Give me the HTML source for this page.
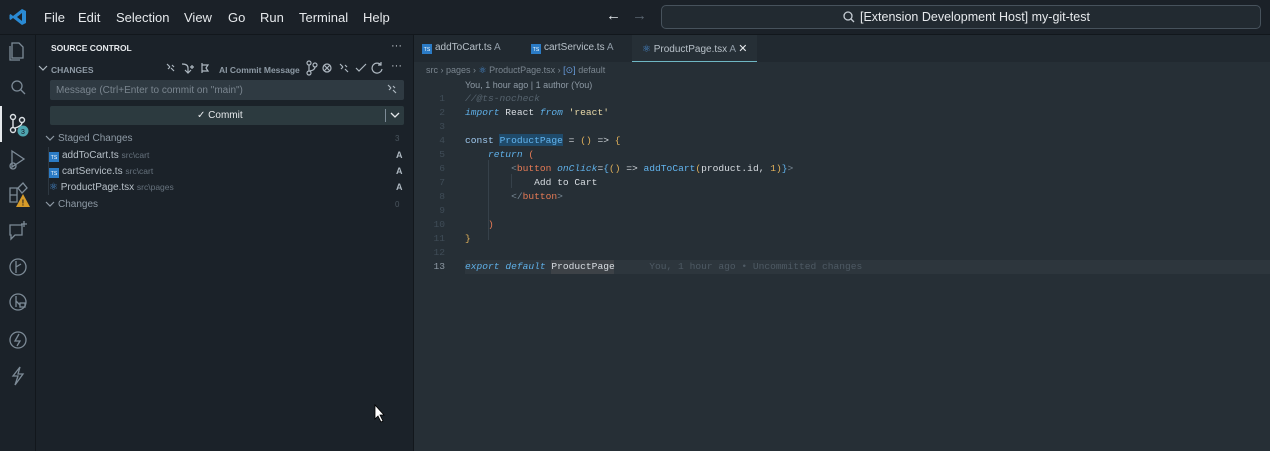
<!DOCTYPE html>
<html><head><meta charset="utf-8"><style>
*{margin:0;padding:0;box-sizing:border-box}
body{width:1270px;height:451px;overflow:hidden;background:#262f36;font-family:"Liberation Sans",sans-serif;color:#c5ccd3;position:relative}
.abs{position:absolute}
#title{left:0;top:0;width:1270px;height:35px;background:#1b2128;border-bottom:1px solid #12171c}
.menu{top:10px;font-size:13px;color:#e6e9ec}
#act{left:0;top:35px;width:36px;height:416px;background:#1b2229;border-right:1px solid #12171c}
#side{left:36px;top:35px;width:378px;height:416px;background:#1b2229;border-right:1px solid #12171c}
.t{font-size:11px;white-space:nowrap}
#tabs{left:414px;top:35px;width:856px;height:27px;background:#212930}
.code{font-family:"Liberation Mono",monospace;font-size:9.6px;white-space:pre;left:465px;color:#d8dde2}
.ln{font-family:"Liberation Mono",monospace;font-size:9.6px;color:#3f4c57;width:30px;text-align:right;left:415px}
.kw{color:#5fb0e8;font-style:italic}
.o{color:#e0b05a}
.tg{color:#e57a55}
.fn{color:#62b4ee}
.ts{display:inline-block;width:10px;height:10px;background:#2b7bc5;color:#fff;font-size:5px;text-align:center;line-height:13px;vertical-align:-1px;margin-right:3px}
.ic{stroke:#7d8b97;fill:none;stroke-width:1.3}
.tb{stroke:#aeb8c1;fill:none;stroke-width:1.2}
</style></head><body>
<div id="title" class="abs"></div>
<svg class="abs" style="left:9px;top:8px" width="18" height="18" viewBox="0 0 18 18"><path d="M13 1 L17 3 V15 L13 17 L4 10 L1.5 12 L0.5 11 V7 L1.5 6 L4 8 L13 1 Z M13 5 L8 9 L13 13 Z" fill="#2a8ad4"/></svg>
<div class="abs menu" style="left:44px">File</div>
<div class="abs menu" style="left:78px">Edit</div>
<div class="abs menu" style="left:116px">Selection</div>
<div class="abs menu" style="left:184px">View</div>
<div class="abs menu" style="left:228px">Go</div>
<div class="abs menu" style="left:260px">Run</div>
<div class="abs menu" style="left:299px">Terminal</div>
<div class="abs menu" style="left:363px">Help</div>
<div class="abs" style="left:606px;top:7px;font-size:15px;color:#e0e4e8">←</div>
<div class="abs" style="left:632px;top:7px;font-size:15px;color:#5a6570">→</div>
<div class="abs" style="left:661px;top:5px;width:600px;height:24px;border:1px solid #47525c;border-radius:5px;background:#222a31"></div>
<svg class="abs" style="left:843px;top:11px" width="12" height="12"><circle cx="5" cy="5" r="4" stroke="#c5ccd3" fill="none" stroke-width="1.3"/><path d="M8 8 L11 11" stroke="#c5ccd3" stroke-width="1.3"/></svg>
<div class="abs" style="left:860px;top:10px;font-size:12.5px;color:#e6e9ec">[Extension Development Host] my-git-test</div>

<div id="act" class="abs"></div>
<div class="abs" style="left:0;top:106px;width:2px;height:36px;background:#e6e9ec"></div>
<svg class="abs" style="left:0;top:35px" width="36" height="360">
<g class="ic"><path d="M12 8 H19 L23 12 V23 H12 Z M10 11 V25 H20"/>
<circle cx="17" cy="51" r="5"/><path d="M20.5 54.5 L25 59"/></g>
<g stroke="#dde2e6" fill="none" stroke-width="1.4"><circle cx="13" cy="82" r="2.5"/><circle cx="13" cy="95" r="2.5"/><circle cx="22" cy="85" r="2.5"/><path d="M13 84.5 V92.5 M22 87.5 Q22 91 15 93"/></g>
<circle cx="23" cy="96" r="5.5" fill="#4fa6b0"/><text x="23" y="99" font-size="7" text-anchor="middle" fill="#112">3</text>
<g class="ic"><path d="M12 116 L24 124 L12 132 Z"/><circle cx="13" cy="131" r="3"/>
<path d="M10 153 H17 V167 H10 Z M10 160 H17 M18 153 L23 148 L27 153 L22 158 Z"/>
<path d="M10 190 H22 V200 H15 L11 204 V200 H10 Z M24 186 V192 M21 189 H27"/>
<circle cx="18" cy="232" r="8"/><path d="M16 226 V238 M16 232 L21 229"/>
<circle cx="18" cy="267" r="8"/><path d="M16 261 V272 M16 266 L20 270"/><rect x="20" y="268" width="5" height="4"/>
<circle cx="18" cy="305" r="8"/><path d="M19 299 L15 306 H20 L17 311"/>
<path d="M20 332 L13 341 H18 L15 350 L23 339 H18 Z"/></g>
</svg>
<svg class="abs" style="left:16px;top:194px" width="14" height="13"><path d="M7 0 L14 13 H0 Z" fill="#d79b29"/><text x="7" y="11.5" font-size="8" text-anchor="middle" fill="#222" font-weight="bold">!</text></svg>

<div id="side" class="abs"></div>
<div class="abs t" style="left:51px;top:43px;font-size:8.5px;color:#e6e9ec;font-weight:bold">SOURCE CONTROL</div>
<div class="abs t" style="left:391px;top:40px;color:#c5ccd3">···</div>
<svg class="abs" style="left:38px;top:64px" width="10" height="8"><path d="M1 2 L5 6 L9 2" class="tb" stroke="#8e9aa5"/></svg>
<div class="abs t" style="left:51px;top:65px;font-size:8.5px;color:#8e9aa5;font-weight:bold">CHANGES</div>
<svg class="abs" style="left:164px;top:61px" width="50" height="14">
<g class="tb"><path d="M3 3 L6 6 M7 7 L10 10 M4 8 L6 6 M8 4 L10 6"/>
<path d="M18 3 Q24 3 24 7 L24 12 M21 9 L24 12 L27 9 M26 6 H30 M28 4 V8"/>
<path d="M38 2 V12 M38 4 H44 L42 7 L44 10 H38"/></g></svg>
<div class="abs t" style="left:219px;top:65px;font-size:8.5px;color:#8e9aa5;font-weight:bold">AI Commit Message</div>
<svg class="abs" style="left:304px;top:60px" width="86" height="16">
<g class="tb"><circle cx="5" cy="3" r="2"/><circle cx="5" cy="13" r="2"/><circle cx="11" cy="5" r="2"/><path d="M5 5 V11 M11 7 Q11 10 6 11"/>
<circle cx="23" cy="8" r="4"/><path d="M20 5 L26 11 M26 5 L20 11"/>
<path d="M36 4 L39 7 M41 9 L44 12 M37 9 L39 7 M41 5 L43 7"/>
<path d="M52 8 L55 11 L62 4"/>
<path d="M77 5 A5 5 0 1 0 78 9 M77 2 V5 H74"/></g></svg>
<div class="abs t" style="left:391px;top:60px;color:#c5ccd3">···</div>
<div class="abs" style="left:50px;top:80px;width:354px;height:20px;background:#2f3a42;border-radius:2px"></div>
<div class="abs t" style="left:56px;top:85px;font-size:10px;color:#7a858f">Message (Ctrl+Enter to commit on "main")</div>
<svg class="abs" style="left:386px;top:83px" width="12" height="12"><path d="M2 2 L5 5 M7 7 L10 10 M3 7 L5 5 M7 3 L9 5" class="tb"/></svg>
<div class="abs" style="left:50px;top:106px;width:354px;height:19px;background:#2c3a3f;border-radius:2px"></div>
<div class="abs" style="left:385px;top:109px;width:1px;height:13px;background:#7d8b97"></div>
<div class="abs t" style="left:197px;top:110px;font-size:10px;color:#e6e9ec">✓ Commit</div>
<svg class="abs" style="left:390px;top:111px" width="10" height="8"><path d="M1 2 L5 6 L9 2" stroke="#e6e9ec" stroke-width="1.3" fill="none"/></svg>
<svg class="abs" style="left:45px;top:134px" width="10" height="8"><path d="M1 2 L5 6 L9 2" stroke="#8e9aa5" stroke-width="1.2" fill="none"/></svg>
<div class="abs t" style="left:58px;top:133px;font-size:10px;color:#8e9aa5">Staged Changes</div>
<div class="abs t" style="left:395px;top:134px;font-size:8px;color:#4a555e">3</div>
<div class="abs" style="left:48px;top:147px;width:1px;height:48px;background:#2e3841"></div>
<div class="abs t" style="left:49px;top:150px;font-size:10px"><span class="ts">TS</span><span style="color:#b7c0c8">addToCart.ts</span> <span style="color:#66727d;font-size:8.5px">src\cart</span></div>
<div class="abs t" style="left:49px;top:166px;font-size:10px"><span class="ts">TS</span><span style="color:#b7c0c8">cartService.ts</span> <span style="color:#66727d;font-size:8.5px">src\cart</span></div>
<div class="abs t" style="left:49px;top:182px;font-size:10px"><span style="color:#4a90d9">⚛</span> <span style="color:#b7c0c8">ProductPage.tsx</span> <span style="color:#66727d;font-size:8.5px">src\pages</span></div>
<div class="abs t" style="left:396px;top:150px;font-size:9px;color:#aeb8c1;font-weight:bold">A</div>
<div class="abs t" style="left:396px;top:166px;font-size:9px;color:#aeb8c1;font-weight:bold">A</div>
<div class="abs t" style="left:396px;top:182px;font-size:9px;color:#aeb8c1;font-weight:bold">A</div>
<svg class="abs" style="left:45px;top:200px" width="10" height="8"><path d="M1 2 L5 6 L9 2" stroke="#8e9aa5" stroke-width="1.2" fill="none"/></svg>
<div class="abs t" style="left:58px;top:199px;font-size:10px;color:#8e9aa5">Changes</div>
<div class="abs t" style="left:395px;top:200px;font-size:8px;color:#4a555e">0</div>
<svg class="abs" style="left:374px;top:404px" width="12" height="20"><path d="M1 1 V15 L4 12 L7 18 L9 17 L6 11 H10 Z" fill="#fff" stroke="#000" stroke-width="0.8"/></svg>

<div id="tabs" class="abs"></div>
<div class="abs" style="left:632px;top:35px;width:125px;height:27px;background:#262f36;border-bottom:1px solid #6fb7c4"></div>
<div class="abs t" style="left:422px;top:42px;font-size:10px"><span class="ts">TS</span><span style="color:#b7c0c8">addToCart.ts</span> <span style="color:#8e9aa5">A</span></div>
<div class="abs t" style="left:531px;top:42px;font-size:10px"><span class="ts">TS</span><span style="color:#b7c0c8">cartService.ts</span> <span style="color:#8e9aa5">A</span></div>
<div class="abs t" style="left:642px;top:42px;font-size:10px"><span style="color:#4a90d9">⚛</span> <span style="color:#b7c0c8">ProductPage.tsx</span> <span style="color:#8e9aa5">A</span> <span style="color:#e6e9ec;font-size:11px">✕</span></div>
<div class="abs t" style="left:426px;top:65px;font-size:9px;color:#7a858f">src › pages › <span style="color:#4a90d9">⚛</span> ProductPage.tsx › <span style="color:#6a9ee0">[⊙]</span> default</div>
<div class="abs t" style="left:465px;top:80px;font-size:9px;color:#8e9aa5">You, 1 hour ago | 1 author (You)</div>
<div class="abs" style="left:465px;top:260px;width:805px;height:14px;background:#2d363d"></div>
<div class="abs" style="left:551px;top:260px;width:63px;height:14px;background:#3d4247"></div>
<div class="abs" style="left:499px;top:134px;width:64px;height:12px;background:#1f4a6a"></div>
<div class="abs" style="left:488px;top:160px;width:1px;height:80px;background:#36414a"></div>
<div class="abs" style="left:511px;top:174px;width:1px;height:14px;background:#36414a"></div>
<div class="abs ln" style="top:93px">1</div><div class="abs ln" style="top:107px">2</div><div class="abs ln" style="top:121px">3</div><div class="abs ln" style="top:135px">4</div><div class="abs ln" style="top:149px">5</div><div class="abs ln" style="top:163px">6</div><div class="abs ln" style="top:177px">7</div><div class="abs ln" style="top:191px">8</div><div class="abs ln" style="top:205px">9</div><div class="abs ln" style="top:219px">10</div><div class="abs ln" style="top:233px">11</div><div class="abs ln" style="top:247px">12</div><div class="abs ln" style="top:261px;color:#8e9aa5">13</div>
<div class="abs code" style="top:93px;color:#56636e;font-style:italic">//@ts-nocheck</div>
<div class="abs code" style="top:107px"><span class="kw">import</span> React <span class="kw">from</span> <span style="color:#e8d9a8">'react'</span></div>
<div class="abs code" style="top:135px"><span style="color:#9fc8ee">const</span> <span class="fn">ProductPage</span> = <span class="o">()</span> =&gt; <span class="o">{</span></div>
<div class="abs code" style="top:149px">    <span class="kw">return</span> <span class="tg">(</span></div>
<div class="abs code" style="top:163px">        <span style="color:#7a8a96">&lt;</span><span class="tg">button</span> <span class="kw">onClick</span>=<span class="fn">{</span><span class="o">()</span> =&gt; <span class="fn">addToCart</span><span class="o">(</span>product.id, <span class="o">1</span><span class="o">)</span><span class="fn">}</span><span style="color:#7a8a96">&gt;</span></div>
<div class="abs code" style="top:177px">            Add to Cart</div>
<div class="abs code" style="top:191px">        <span style="color:#7a8a96">&lt;/</span><span class="tg">button</span><span style="color:#7a8a96">&gt;</span></div>
<div class="abs code" style="top:219px">    <span class="tg">)</span></div>
<div class="abs code" style="top:233px"><span class="o">}</span></div>
<div class="abs code" style="top:261px"><span class="kw">export</span> <span class="kw">default</span> ProductPage    <span style="color:#4e5a64">  You, 1 hour ago • Uncommitted changes</span></div>
</body></html>
